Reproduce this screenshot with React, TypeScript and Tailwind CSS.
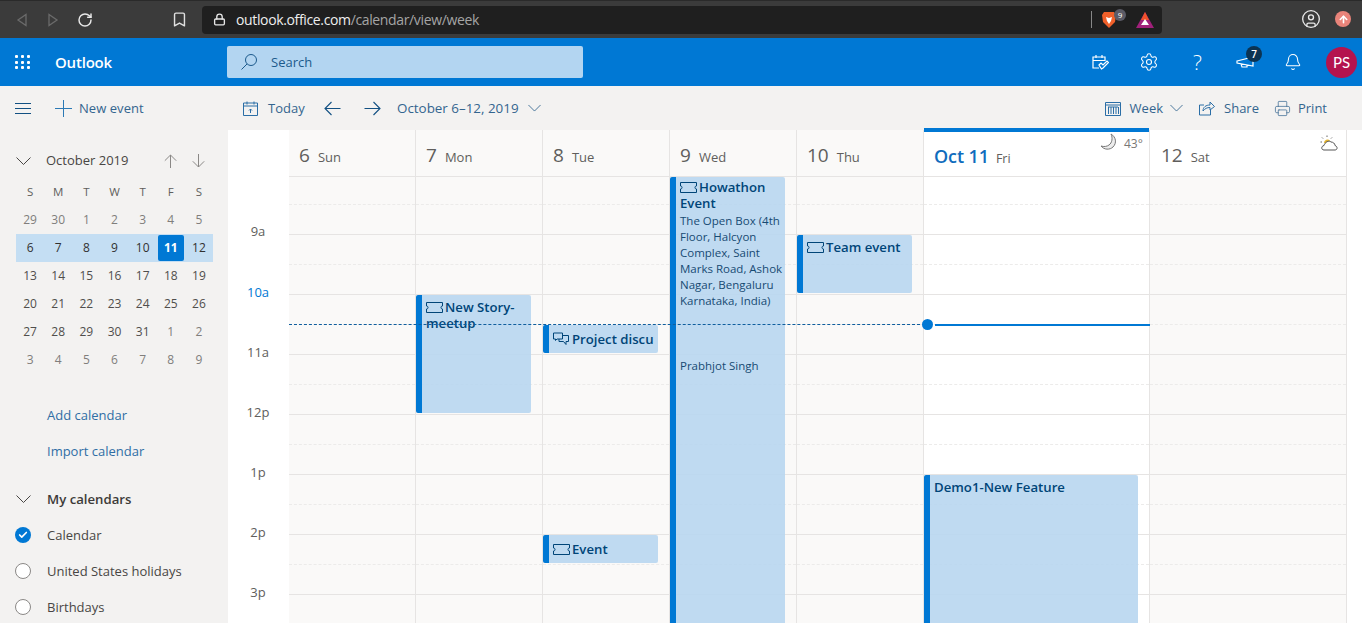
import React from "react";
import { RotateCw, Bookmark, Lock, CircleUser, Printer, Settings, Bell, ArrowUp, Check } from "lucide-react";

const font = "font-['Open_Sans','Noto_Sans',sans-serif]";

const Ticket = () => (
  <svg width="17" height="11" viewBox="0 0 17 11" fill="none" stroke="currentColor" strokeWidth="1" className="shrink-0">
    <path d="M.5.5h16v3.500a1.500 1.500 0 0 0 0 3v3.500H.5V7a1.500 1.500 0 0 0 0-3z" />
  </svg>
);

const Chat = () => (
  <svg width="16" height="14" viewBox="0 0 16 14" fill="none" stroke="currentColor" strokeWidth="1" className="shrink-0">
    <path d="M.5 1h9v6H4L2.500 8.500V7h-2zM6 7v2.500h4.500l2.500 3v-3h2.500v-6H9.500" />
  </svg>
);

const Chevron = ({ className, width = 15 }: { className?: string; width?: number }) => (
  <svg width={width} height="8" viewBox="0 0 15 8" fill="none" stroke="currentColor" strokeWidth="1" className={className}>
    <path d="M.5.500 7.500 7.500 14.500.500" />
  </svg>
);

const HArrow = ({ flip, className }: { flip?: boolean; className?: string }) => (
  <svg width="17" height="15" viewBox="0 0 17 15" fill="none" stroke="currentColor" strokeWidth="1.100" className={`${flip ? "-scale-x-100" : ""} ${className ?? ""}`}>
    <path d="M16.500 7.500H1M7.500 1 1 7.500 7.500 14" />
  </svg>
);

const VArrow = ({ flip, className }: { flip?: boolean; className?: string }) => (
  <svg width="13" height="14" viewBox="0 0 13 14" fill="none" stroke="currentColor" strokeWidth="1" className={`${flip ? "-scale-y-100" : ""} ${className ?? ""}`}>
    <path d="M6.500 14V1M.8 6.700 6.500 1l5.700 5.700" />
  </svg>
);

const Ev = ({ top, height, left, width, children }: { top: number; height: number; left: number; width: number; children: React.ReactNode }) => (
  <div className="absolute overflow-hidden rounded-[2px] bg-[#b8d6ef]/90 border-l-[6px] border-[#0078d4] text-[#0b3a66]" style={{ top, height, left, width }}>
    {children}
  </div>
);

const Title = ({ icon, tight, children }: { icon?: React.ReactNode; tight?: boolean; children: React.ReactNode }) => (
  <div className={`pl-[4px] ${tight ? "pt-[2px]" : "pt-[4px]"} text-[13.200px] leading-4 font-[550] text-[#004578]`}>
    {icon && <span className="inline-block align-[-1px] mr-[2px]">{icon}</span>}
    {children}
  </div>
);

const week = [
  ["29", "30", "1", "2", "3", "4", "5"],
  ["6", "7", "8", "9", "10", "11", "12"],
  ["13", "14", "15", "16", "17", "18", "19"],
  ["20", "21", "22", "23", "24", "25", "26"],
  ["27", "28", "29", "30", "31", "1", "2"],
  ["3", "4", "5", "6", "7", "8", "9"],
];

const muted = (r: number, c: number) => (r === 0 ? c < 7 : r === 4 ? c > 4 : r === 5);

const days = [
  { n: "6", d: "Sun", w: 127 },
  { n: "7", d: "Mon", w: 127 },
  { n: "8", d: "Tue", w: 127 },
  { n: "9", d: "Wed", w: 127 },
  { n: "10", d: "Thu", w: 127 },
  { n: "11", d: "Fri", w: 226, today: true },
  { n: "12", d: "Sat", w: 197 },
];

const Rows = () => (
  <>
    <div className="h-[28px] border-b border-dashed border-[#ecebea]" />
    {Array.from({ length: 8 }).map((_, i) => (
      <React.Fragment key={i}>
        <div className="h-[30px] border-b border-[#e6e4e3]" />
        <div className="h-[30px] border-b border-dashed border-[#ecebea]" />
      </React.Fragment>
    ))}
  </>
);

export default function App() {
  return (
    <div className={`${font} h-[623px] w-[1362px] overflow-hidden flex flex-col bg-white`}>
      {/* browser chrome */}
      <div className="h-[38px] shrink-0 bg-[#3b3b3b] flex items-center relative border-t border-[#2a2a2a]">
        <div className="flex items-center pl-[16px] w-[202px] shrink-0 text-[#6b6b6b]">
          <svg width="12" height="14" viewBox="0 0 12 14" fill="none" stroke="currentColor" strokeWidth="1.300"><path d="M10 1.500v11L2 7z" /></svg>
          <svg className="ml-[19px]" width="12" height="14" viewBox="0 0 12 14" fill="none" stroke="currentColor" strokeWidth="1.300"><path d="M2 1.500v11L10 7z" /></svg>
          <RotateCw size={16} strokeWidth={2.200} className="ml-[18px] text-[#e8e8e8]" />
          <Bookmark size={17} strokeWidth={2} className="ml-[78px] text-[#e0e0e0]" />
        </div>
        <div className="w-[960px] h-[28px] bg-[#1f1f1f] rounded-[4px] flex items-center pl-[11px] text-[14px] relative">
          <Lock size={13} strokeWidth={2.500} className="text-[#e6e6e6] mr-[10px]" />
          <span className="text-[#eeeeee] tracking-[-0.36px]">outlook.office.com</span><span className="text-[#a5a5a5] tracking-[-0.36px]">/calendar/view/week</span>
          <div className="ml-auto mr-[70px] h-[17px] w-px bg-[#888]" />
          <svg className="absolute left-[899px] top-[5px]" width="16" height="18" viewBox="0 0 16 18"><path d="M3 1h10l2 3-1 7-6 6-6-6-1-7z" fill="#f0602a" /><path d="M5 6l3 1 3-1-1 4-2 3-2-3z" fill="#fff" /></svg>
          <span className="absolute left-[912px] top-[3px] w-[12px] h-[12px] rounded-full bg-[#5b5b66] text-white text-[8px] leading-[12px] text-center">9</span>
          <svg className="absolute left-[934px] top-[6px]" width="18" height="16" viewBox="0 0 18 16"><path d="M9 0l9 16H0z" fill="#a0207a" /><path d="M9 0l4 8H5z" fill="#f0522a" /><path d="M9 7l4 6H5z" fill="#fff" /></svg>
        </div>
        <CircleUser size={20} strokeWidth={1.600} className="absolute left-[1301px] top-[8px] text-[#e8e8e8]" />
        <div className="absolute left-[1335px] top-[10px] w-[16px] h-[16px] rounded-full bg-[#e9847a] flex items-center justify-center">
          <ArrowUp size={11} strokeWidth={3.500} className="text-white" />
        </div>
      </div>

      {/* suite header */}
      <div className="h-[48px] shrink-0 bg-[#0078d4] flex items-center text-white relative">
        <div className="w-[15px] ml-[15px] grid grid-cols-3 gap-[2.500px]">
          {Array.from({ length: 9 }).map((_, i) => <span key={i} className="w-[3px] h-[3px] bg-white rounded-[1px]" />)}
        </div>
        <span className="ml-[25px] w-[172px] text-[15px] font-semibold tracking-[-0.2px]">Outlook</span>
        <div className="w-[356px] h-[32px] bg-[#b3d5f1] rounded-[2px] flex items-center pl-[14px] text-[#1c5a8c] text-[13px]">
          <svg className="mr-[14px]" width="16" height="16" viewBox="0 0 16 16" fill="none" stroke="currentColor" strokeWidth="1"><circle cx="10" cy="6" r="5.500" /><path d="M6 10 .5 15.500" /></svg>
          <span className="pt-[1px]">Search</span>
        </div>
        <div className="ml-auto flex items-center relative">
          <svg className="mr-[30px]" width="18" height="17" viewBox="0 0 18 17" fill="none" stroke="white" strokeWidth="1.200"><path d="M8 14H2V3h12v4M2 6.500h12M5 1v3M11 1v3" /><path d="M8 11l2-2 2 2 4-4 1.500 1.500L12 14l-1.500 1z" /></svg>
          <Settings size={20} strokeWidth={1.300} className="mr-[34px]" />
          <span className="text-[21px] font-light leading-none mr-[33px] w-[10px]">?</span>
          <div className="relative mr-[29px]">
            <svg width="19" height="14" viewBox="0 0 19 14" fill="none" stroke="white" strokeWidth="1.200"><path d="M1 6l16-4v9L1 8zM5 9l1 3 5 0 0-2" /></svg>
            <span className="absolute -top-[9px] left-[10px] w-[16px] h-[16px] rounded-full bg-[#0b3352] text-[10px] leading-[16px] text-center font-semibold">7</span>
          </div>
          <Bell size={18} strokeWidth={1.400} className="mr-[24px]" />
          <div className="w-[31px] h-[31px] rounded-full bg-[#b4134e] text-[15px] leading-[31px] text-center mr-[5px] font-['Lato',sans-serif]">PS</div>
        </div>
      </div>

      {/* command bar */}
      <div className="h-[44px] shrink-0 bg-[#f3f2f1] flex items-center text-[13px] text-[#33658f] relative">
        <svg className="ml-[15px] text-[#125082]" width="16" height="11" viewBox="0 0 16 11" fill="none" stroke="currentColor" strokeWidth="1"><path d="M0 .5h16M0 5.500h16M0 10.500h16" /></svg>
        <svg className="ml-[24px] text-[#2b79b5]" width="17" height="17" viewBox="0 0 17 17" fill="none" stroke="currentColor" strokeWidth="1"><path d="M8.500 0v17M0 8.500h17" /></svg>
        <span className="ml-[7px] w-[164px] tracking-[0.05px] pt-[2px]">New event</span>
        <svg width="15" height="15" viewBox="0 0 15 15" fill="none" stroke="#2b6ea6" strokeWidth="1"><path d="M.5 2h14v12.500H.5zM.5 5h14M4 .5v3M11 .5v3M7.500 12V8M6 9.500 7.500 8 9 9.500" /></svg>
        <span className="ml-[10px] w-[56px] pt-[2px]">Today</span>
        <HArrow className="text-[#125082]" />
        <HArrow flip className="ml-[23px] text-[#125082]" />
        <span className="ml-[16px] text-[13.400px]">October 6–12, 2019</span>
        <Chevron width={13} className="ml-[9px]" />
        <div className="ml-auto flex items-center pr-[35px]">
          <svg width="16" height="15" viewBox="0 0 16 15" fill="none" stroke="#2b6ea6" strokeWidth="1"><path d="M.5 1.500h15v13H.5zM.5 4h15M3.500 6v7M6 6v7M8.500 6v7M11 6v7M13.500 6v7M3 6h10" /></svg>
          <span className="ml-[9px] pt-[2px]">Week</span>
          <Chevron width={13} className="ml-[7px]" />
          <svg className="ml-[16px]" width="16" height="15" viewBox="0 0 16 15" fill="none" stroke="#2b6ea6" strokeWidth="1"><path d="M5 4H.5v10h11V9M4 10c0-4 3-6 7-6V1l4.500 4.500L11 9V6.500c-3 0-5 1-7 3.500z" /></svg>
          <span className="ml-[9px] pt-[2px]">Share</span>
          <Printer size={17} strokeWidth={1} className="ml-[15px]" />
          <span className="ml-[7px] pt-[2px]">Print</span>
        </div>
      </div>

      <div className="flex flex-1 min-h-0">
        {/* sidebar */}
        <div className="w-[228px] shrink-0 bg-[#f3f2f1] text-[#484644]">
          <div className="h-[60px] flex items-center pt-[1px]">
            <Chevron className="ml-[16px]" />
            <span className="ml-[15px] text-[13px] w-[118px]">October 2019</span>
            <VArrow className="text-[#8a8886]" />
            <VArrow flip className="text-[#8a8886] ml-[15px]" />
          </div>
          <div className="ml-[16px] w-[197px] text-[12px] -mt-[12px]">
            <div className="grid grid-cols-7 h-[28px] items-center text-center text-[#605e5c]">
              {["S", "M", "T", "W", "T", "F", "S"].map((d, i) => <span key={i} className="text-[11.500px]">{d}</span>)}
            </div>
            {week.map((row, r) => (
              <div key={r} className={`grid grid-cols-7 h-[28px] items-center text-center ${r === 1 ? "bg-[#c4def3]" : ""}`}>
                {row.map((d, c) => {
                  const today = r === 1 && c === 5;
                  return (
                    <span key={c} className={`h-[26px] leading-[26px] ${today ? "bg-[#0078d4] text-white font-bold rounded-[2px] mx-[1px]" : muted(r, c) ? "text-[#807e7c]" : r === 1 ? "text-[#323130]" : "text-[#504e4c]"}`}>{d}</span>
                  );
                })}
              </div>
            ))}
          </div>
          <div className="mt-[32px] pl-[47px] text-[13px] text-[#2f6ea5] flex flex-col gap-[18px] leading-[18px]">
            <span>Add calendar</span>
            <span>Import calendar</span>
          </div>
          <div className="mt-[30px] flex items-center h-[18px]">
            <Chevron className="ml-[16px]" />
            <span className="ml-[16px] pt-[1px] text-[13.200px] font-[550] text-[#3d3b39]">My calendars</span>
          </div>
          <div className="mt-[18px] flex flex-col gap-[18px] text-[13px] leading-[18px]">
            <div className="flex items-center">
              <span className="ml-[15px] w-[16px] h-[16px] rounded-full bg-[#0078d4] flex items-center justify-center"><Check size={10} strokeWidth={4} className="text-white" /></span>
              <span className="ml-[16px]">Calendar</span>
            </div>
            {["United States holidays", "Birthdays"].map((t) => (
              <div key={t} className="flex items-center">
                <span className="ml-[15px] w-[16px] h-[16px] rounded-full bg-white border border-[#8a8886]" />
                <span className="ml-[16px]">{t}</span>
              </div>
            ))}
          </div>
        </div>

        {/* time column */}
        <div className="w-[61px] shrink-0 bg-white text-[13px] text-[#605e5c] text-center pr-[1px]">
          <div className="h-[91.500px]" />
          {["9a", "10a", "11a", "12p", "1p", "2p", "3p"].map((t) => (
            <div key={t} className={`h-[60px] ${t === "10a" ? "text-[#0078d4] font-medium pt-[1px]" : t === "9a" ? "" : "pt-[1px]"}`}>{t}</div>
          ))}
        </div>

        {/* week */}
        <div className="flex-1 min-w-0 relative flex">
          {days.map((d) => (
            <div key={d.n} style={{ width: d.w }} className={`shrink-0 border-r border-[#e6e4e3] ${d.today ? "bg-white" : "bg-[#faf9f8]"}`}>
              <div className={`h-[47px] relative border-b border-[#e6e4e3] flex items-baseline pt-[11px] ${d.today ? "bg-white border-t-[4px] border-t-[#0078d4] -mt-[2px] h-[49px] pt-[9px] pl-[10px]" : d.d === "Sat" ? "bg-white pl-[11px]" : "pl-[10px]"}`}>
                {d.today ? (
                  <>
                    <span className="text-[18px] font-semibold text-[#0f6cbd] tracking-[-0.1px]">Oct 11</span>
                    <span className="ml-[7px] text-[12.500px] text-[#605e5c]">Fri</span>
                    <span className="absolute left-[176px] top-[1px] flex items-center text-[12px] text-[#797775]">
                      <svg width="18" height="18" viewBox="0 0 18 18" fill="#ececec" stroke="#777" strokeWidth="1" className="mr-[6px]"><path d="M11 1c2 4 1 9-2 11-2 1.500-5 2-8 1 3 4 9 4 12 1 4-4 3-10-2-13z" /></svg>
                      <span className="relative top-[2px]">43°</span>
                    </span>
                  </>
                ) : (
                  <>
                    <span className="text-[19px] text-[#605e5c]">{d.n}</span>
                    <span className="ml-[8px] text-[13px] text-[#605e5c]">{d.d}</span>
                  </>
                )}
                {d.d === "Sat" && (
                  <svg className="absolute right-[8px] top-[5px]" width="18" height="16" viewBox="0 0 18 16" fill="none"><path d="M7 .5v1.500M2 2.500l1 1M.5 7H2M12 2.500l-1 1" stroke="#666" /><path d="M4 8a3.500 3.500 0 0 1 6-2.500L7 8z" fill="#e4b42e" /><path d="M4 15c-3 0-3-4 0-4.500C5 7 9 5 11 7c2 0 4 1.500 4 3.500 3 1 2.500 4.500 0 4.500z" fill="#fff" stroke="#555" /></svg>
                )}
              </div>
              <Rows />
            </div>
          ))}
          {/* blank strip right of the grid */}
          <div className="flex-1 bg-white" />

          <Ev left={127} top={165} width={115} height={118}><Title icon={<Ticket />}>New Story-meetup</Title></Ev>
          <Ev left={254} top={195} width={115} height={28}><div className="whitespace-nowrap pt-[6px] pl-[4px] text-[13.200px] leading-4 font-[550] text-[#004578] flex"><span className="mr-[3px] mt-[1px]"><Chat /></span>Project discu</div></Ev>
          <Ev left={254} top={405} width={115} height={28}><div className="whitespace-nowrap pt-[6px] pl-[4px] text-[13.200px] leading-4 font-[550] text-[#004578] flex"><span className="mr-[2px] mt-[3px]"><Ticket /></span>Event</div></Ev>
          <Ev left={381} top={47} width={115} height={460}>
            <Title tight icon={<Ticket />}>Howathon Event</Title>
            <div className="pl-[4px] pr-[1px] mt-[2px] text-[11.500px] leading-4 text-[#174a73]">
              The Open Box (4th Floor, Halcyon Complex, Saint Marks Road, Ashok Nagar, Bengaluru Karnataka, India)
              <div className="mt-[49px]">Prabhjot Singh</div>
            </div>
          </Ev>
          <Ev left={508} top={105} width={115} height={58}><Title icon={<Ticket />}>Team event</Title></Ev>
          <Ev left={635} top={345} width={214} height={200}><div className="pl-[4px] pt-[4px] text-[13.200px] leading-4 font-[550] text-[#004578]">Demo1-New Feature</div></Ev>

          {/* now line */}
          <div className="absolute left-0 w-[631px] top-[194px] border-t border-dashed border-[#0f5e9e]" />
          <div className="absolute left-[646px] w-[215px] top-[194px] h-[2px] bg-[#0078d4]" />
          <div className="absolute left-[633px] top-[189px] w-[11px] h-[11px] rounded-full bg-[#0078d4]" />
        </div>
      </div>
    </div>
  );
}
